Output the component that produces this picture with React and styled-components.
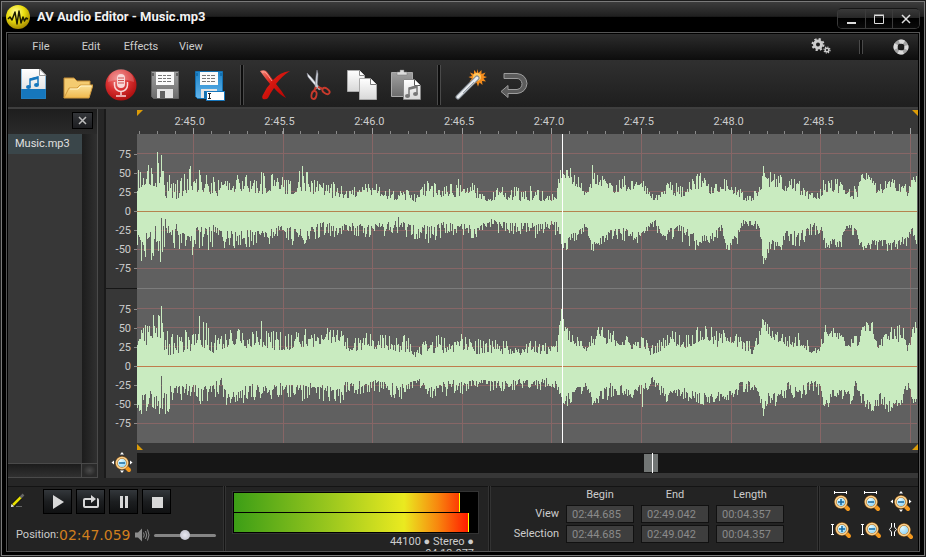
import React from 'react';
import styled, { createGlobalStyle, css } from 'styled-components';

const GlobalStyle = createGlobalStyle`
  * {
    box-sizing: border-box;
  }
  body {
    margin: 0;
    background: #1c1c1c;
    color: #ccc;
    font-family: 'Roboto', 'Liberation Sans', sans-serif;
    font-size: 11px;
    line-height: 14px;
  }
  button,
  input {
    font: inherit;
    color: inherit;
    margin: 0;
    padding: 0;
  }
`;

const Page = styled.div`
  display: flex;
  min-height: 100vh;
  padding: 1px;
`;

const Window = styled.div`
  flex: 1;
  min-width: 0;
  display: flex;
  flex-direction: column;
  border: 1px solid #7a7a7a;
  background: #000;
`;

const TitleBar = styled.header`
  display: flex;
  height: 30px;
  padding: 0 4px;
  background: linear-gradient(#3c3c3c, #1f1f1f 48%, #000 50%, #000);
`;

const Title = styled.h1`
  flex: 1;
  margin: 0 0 0 7px;
  color: #f2f2f2;
  font-size: 13px;
  font-weight: 700;
  line-height: 30px;
`;

const WindowButtons = styled.div`
  display: flex;
  height: 21px;
  margin-top: 6px;
  border: 1px solid #3a3a3a;
  border-top-color: #161616;
  border-radius: 5px;
  overflow: hidden;
`;

const WindowButton = styled.button`
  display: flex;
  justify-content: center;
  align-items: center;
  width: 27px;
  border: 0;
  background: linear-gradient(#3a3a3a, #262626 48%, #000 50%, #0a0a0a);
  & + & {
    border-left: 1px solid #3c3c3c;
  }
`;

const Frame = styled.div`
  flex: 1;
  display: flex;
  flex-direction: column;
  margin: 0 4px 3px;
  padding: 1px 1px 0;
  border: 1px solid #555;
  background: #000;
`;

const MenuBar = styled.nav`
  display: flex;
  align-items: center;
  height: 26px;
  padding: 0 3px 0 8px;
  background: linear-gradient(#2c2c2c, #0d0d0d);
`;

const MenuItem = styled.button`
  width: 50px;
  height: 24px;
  border: 0;
  background: none;
`;

const MenuTools = styled.div`
  display: flex;
  align-items: center;
  margin-left: auto;
  gap: 24px;
`;

const Separator = styled.div`
  width: 4px;
  height: ${({ $height }) => $height}px;
  border-left: 1px solid #4a4a4a;
  border-right: 1px solid #4a4a4a;
  background: #0c0c0c;
`;

const PlainButton = styled.button`
  display: flex;
  justify-content: center;
  align-items: center;
  width: ${({ $width }) => $width}px;
  height: ${({ $height }) => $height}px;
  border: 0;
  background: none;
`;

const Toolbar = styled.div`
  display: flex;
  align-items: center;
  height: 49px;
  padding: 3px 3px 0;
  border-bottom: 2px solid #3e3e3e;
  background: linear-gradient(#303030, #1e1e1e);
`;

const ToolbarGap = styled.div`
  display: flex;
  justify-content: center;
  width: 21px;
`;

const Main = styled.main`
  flex: 1;
  display: grid;
  grid-template-columns: 90px 8px minmax(0, 1fr);
`;

const FilePanel = styled.aside`
  display: flex;
  flex-direction: column;
  border-right: 1px solid #4a4a4a;
  background: #373737;
`;

const FilePanelHeader = styled.div`
  display: flex;
  justify-content: flex-end;
  align-items: flex-start;
  height: 25px;
  padding: 3px 4px 0 0;
  background: linear-gradient(#1e1e1e, #2a2a2a);
`;

const CloseButton = styled.button`
  display: flex;
  justify-content: center;
  align-items: center;
  width: 21px;
  height: 17px;
  border: 1px solid #000;
  background: linear-gradient(#34363a, #1c1d20);
`;

const FileArea = styled.div`
  flex: 1;
  display: flex;
`;

const FileList = styled.ul`
  flex: 1;
  margin: 0;
  padding: 0;
  list-style: none;
`;

const FileItem = styled.li`
  height: 20px;
  padding: 0 7px;
  background: #3a464a;
  line-height: 20px;
  color: #e0e0e0;
`;

const ScrollTrack = styled.div`
  ${({ $vertical }) =>
    $vertical
      ? css`
          width: 15px;
          background: linear-gradient(90deg, #1c1c1c, #303030);
        `
      : css`
          display: flex;
          justify-content: flex-end;
          height: 15px;
          border-top: 1px solid #4a4a4a;
          border-bottom: 1px solid #4a4a4a;
          background: linear-gradient(#1c1c1c, #303030);
        `}
`;

const ScrollCorner = styled.div`
  width: 16px;
  border-left: 1px solid #4a4a4a;
  background: radial-gradient(#4a4a4a, #2a2a2a 60%);
`;

const Splitter = styled.div`
  border-right: 2px solid #1a1a1a;
  background: #262626;
`;

const Editor = styled.section`
  display: grid;
  grid-template-columns: 31px minmax(0, 1fr);
  grid-template-rows: 25px minmax(0, 1fr) 10px 20px;
  padding-bottom: 5px;
  background: #373737;
`;

const Ruler = styled.div`
  display: flex;
  flex-direction: column;
  grid-column: 2;
`;

const RulerLabels = styled.div`
  display: grid;
  grid-template-columns: repeat(8, 1fr);
  margin: 0 7% 0 1%;
  line-height: 12px;
  text-align: center;
`;

const RulerTicks = styled.div`
  height: 6px;
`;

const Markers = styled.div`
  display: flex;
  justify-content: space-between;
  grid-column: 2;
  height: 7px;
  padding-top: 1px;
`;

const Scale = styled.div`
  display: flex;
  flex-direction: column;
`;

const ChannelScale = styled.div`
  flex: 1;
  display: flex;
  flex-direction: column;
  padding: 11px 0 10px;
  & + & {
    border-top: 1px solid #161616;
  }
`;

const ScaleLabel = styled.div`
  flex: 1;
  display: flex;
  justify-content: flex-end;
  align-items: center;
  gap: 3px;
  &::after {
    content: '';
    width: 3px;
    height: 1px;
    background: #8a8a8a;
  }
`;

const StretchSvg = styled.svg`
  display: block;
  width: 100%;
  height: 100%;
  min-height: ${({ $minHeight }) => $minHeight || 0}px;
  shape-rendering: crispEdges;
`;

const Bottom = styled.footer`
  display: flex;
  height: 73px;
  border-top: 8px solid #262626;
  background: #232323;
  box-shadow: inset 0 1px #141414;
  overflow: hidden;
`;

const Player = styled.section`
  display: flex;
  flex-direction: column;
  gap: 11px;
  width: 215px;
  padding-top: 3px;
`;

const PlayerRow = styled.div`
  display: flex;
  align-items: center;
`;

const PencilButton = styled(PlainButton)`
  margin-right: 15px;
`;

const Transport = styled.div`
  display: flex;
  gap: 4px;
`;

const TransportButton = styled.button`
  display: flex;
  justify-content: center;
  align-items: center;
  width: 29px;
  height: 25px;
  border: 1px solid #000;
  background: linear-gradient(#33373b, #1c1e20 50%, #101112);
`;

const PositionLabel = styled.span`
  margin-left: 8px;
  width: 43px;
`;

const PositionTime = styled.output`
  width: 75px;
  color: #d07f1e;
  font-family: 'DejaVu Sans', sans-serif;
  font-size: 14px;
  line-height: 20px;
`;

const VolumeSlider = styled.input`
  appearance: none;
  width: 62px;
  height: 12px;
  margin-left: 4px;
  background: none;
  &::-webkit-slider-runnable-track {
    height: 3px;
    border-radius: 2px;
    background: #858585;
  }
  &::-webkit-slider-thumb {
    appearance: none;
    width: 10px;
    height: 10px;
    margin-top: -4px;
    border-radius: 50%;
    background: radial-gradient(#e8e8f2, #b8b8c4);
  }
`;

const PanelDivider = styled.div`
  width: 3px;
  border-left: 1px solid #333;
  border-right: 1px solid #333;
  background: #141414;
`;

const MeterPanel = styled.section`
  width: 262px;
  padding: 5px 9px 0 6px;
`;

const Meters = styled.div`
  display: grid;
  gap: 1px;
  height: 43px;
  padding: 1px;
  border: 1px solid #333;
  background: #000;
`;

const Meter = styled.div`
  display: flex;
  justify-content: flex-end;
  background: linear-gradient(90deg, #3c9e16, #9cc81e 40%, #eaea20 70%, #f8860e 84%, #ff1e00 96%);
`;

const MeterRest = styled.div`
  border-left: 1px solid #ff0;
  background: #000;
`;

const Format = styled.p`
  margin: 2px 5px 0;
  text-align: right;
  line-height: 12px;
`;

const Ranges = styled.section`
  flex: 1;
  display: flex;
  justify-content: flex-end;
  padding: 1px 26px 0 0;
`;

const RangeTable = styled.table`
  border-spacing: 7px 2px;
  height: 0;
  margin-top: -2px;
  th {
    padding: 0;
    font-weight: 400;
    line-height: 16px;
  }
  th[scope='row'] {
    text-align: right;
  }
  td {
    padding: 0;
  }
`;

const TimeField = styled.input`
  display: block;
  width: 68px;
  height: 18px;
  padding: 0 5px;
  border: 1px solid #111;
  background: #3e3e3e;
  color: #8a8a8a;
`;

const ZoomPanel = styled.section`
  display: grid;
  grid-template-columns: repeat(3, 24px);
  grid-template-rows: repeat(2, 24px);
  gap: 3px 6px;
  width: 98px;
  padding: 4px 0 0 9px;
`;

const GradientDefs = styled.svg`
  position: absolute;
  width: 0;
  height: 0;
`;

const IconSvg = styled.svg`
  flex-shrink: 0;
`;

const Icon = ({ size = 32, children }) => (
  <IconSvg width={size} height={size} viewBox={`0 0 ${size} ${size}`} aria-hidden="true">
    {children}
  </IconSvg>
);

const vertical = { x1: 0, y1: 0, x2: 0, y2: 1 };

const Gradients = () => (
  <GradientDefs aria-hidden="true">
    <defs>
      <radialGradient id="yellow" cx="0.4" cy="0.3" r="0.7">
        <stop offset="0" stopColor="#fffb9a" />
        <stop offset="0.5" stopColor="#ecdf10" />
        <stop offset="1" stopColor="#a88c00" />
      </radialGradient>
      <linearGradient id="paper" {...vertical}>
        <stop offset="0" stopColor="#fff" />
        <stop offset="1" stopColor="#d8d8d8" />
      </linearGradient>
      <linearGradient id="folder" {...vertical}>
        <stop offset="0" stopColor="#fbe29a" />
        <stop offset="1" stopColor="#f0b84c" />
      </linearGradient>
      <radialGradient id="red" cx="0.4" cy="0.3" r="0.75">
        <stop offset="0" stopColor="#f08080" />
        <stop offset="0.5" stopColor="#d83030" />
        <stop offset="1" stopColor="#a80c0c" />
      </radialGradient>
      <linearGradient id="cross" x1="0" y1="0" x2="1" y2="1">
        <stop offset="0" stopColor="#f89080" />
        <stop offset="0.4" stopColor="#d81810" />
        <stop offset="1" stopColor="#b00000" />
      </linearGradient>
      <linearGradient id="grey" {...vertical}>
        <stop offset="0" stopColor="#a0a0a0" />
        <stop offset="1" stopColor="#6c6c6c" />
      </linearGradient>
      <linearGradient id="blue" {...vertical}>
        <stop offset="0" stopColor="#1e84c8" />
        <stop offset="1" stopColor="#62b4ec" />
      </linearGradient>
      <radialGradient id="lens" cx="0.35" cy="0.3" r="0.8">
        <stop offset="0" stopColor="#e4fbff" />
        <stop offset="1" stopColor="#7cc8f0" />
      </radialGradient>
    </defs>
  </GradientDefs>
);

const LogoIcon = () => (
  <svg width="24" height="30" viewBox="0 -3 24 30" aria-hidden="true">
    <circle cx="12" cy="12" r="12" fill="url(#yellow)" />
    <path
      d="M2 14l2-2 2 3 3-8 2 12 2-13 2 12 2-6 1.500 4 1.500-3 2 1"
      fill="none"
      stroke="#1c1a00"
      strokeWidth="1.500"
      strokeLinejoin="round"
    />
  </svg>
);

const Note = ({ color }) => (
  <>
    <path d="M13 18V10l8-2v8" fill="none" stroke={color} strokeWidth="1.500" />
    <path d="M13 9.500l8-2v2.500l-8 2z" fill={color} />
    <ellipse cx="11.500" cy="18" rx="2.500" ry="2" fill={color} />
    <ellipse cx="19.500" cy="16" rx="2.500" ry="2" fill={color} />
  </>
);

const NewFileIcon = () => (
  <Icon>
    <path d="M4 0h19l6 6v24H4z" fill="url(#paper)" />
    <path d="M4 20h25v10H4z" fill="#1677bd" />
    <path d="M4.500 0v29.500h24V6" fill="none" stroke="#2a86c4" opacity="0.5" />
    <path d="M22.500 0v6.500h6.500z" fill="#fff" stroke="#999" />
    <Note color="#1677bd" />
  </Icon>
);

const OpenIcon = () => (
  <Icon>
    <path d="M3 29V9h10l3 3h13v4" fill="#f4cb70" stroke="#c08a34" />
    <path d="M3 29l5-10h8l3-3h13l-4 13z" fill="url(#folder)" stroke="#d29a3c" strokeLinejoin="round" />
    <path d="M9 20h8l3-3h10" fill="none" stroke="#fff3c8" />
  </Icon>
);

const RecordIcon = () => (
  <Icon>
    <circle cx="16" cy="16" r="15.500" fill="url(#red)" />
    <path d="M3 13a13 13 0 0 1 26 0q-13-5-26 0z" fill="#fff" opacity="0.2" />
    <rect x="12" y="5" width="8" height="14" rx="4" fill="#f8d8d8" />
    <path d="M13 9h6M13 11.500h6M13 14h6" stroke="#d05050" />
    <path d="M9.500 13v3a6.500 6.500 0 0 0 13 0v-3M16 22.500V26M11 27h10" fill="none" stroke="#f8d8d8" strokeWidth="1.500" />
  </Icon>
);

const Floppy = ({ body, edge }) => (
  <>
    <path d="M2.500 2.500h27v27h-25l-2-2z" fill={body} stroke={edge} />
    <path d="M7 3h18v13H7z" fill="#fafafa" />
    <path d="M9 6.500h14M9 9.500h14M9 12.500h14" stroke="#777" strokeDasharray="4 1 3 1" />
    <path d="M3 4h2v3H3zM27 4h2v3h-2z" fill={edge} />
    <path d="M8 20h16v9H8z" fill="#e4e4e4" />
    <path d="M11 22h5v7h-5z" fill={edge} />
  </>
);

const SaveIcon = () => (
  <Icon>
    <Floppy body="url(#grey)" edge="#606060" />
  </Icon>
);

const SaveAsIcon = () => (
  <Icon>
    <Floppy body="url(#blue)" edge="#1470b0" />
    <path d="M13.500 22.500h18v9h-18z" fill="#fff" stroke="#1677bd" />
    <path d="M15 24.500h3M16.500 24v5M15 29.500h3" stroke="#222" fill="none" />
  </Icon>
);

const DeleteIcon = () => (
  <Icon>
    <path
      d="M2 2q5-2 7 1l6 8q7-8 17-9-8 5-14 13 6 7 10 14-6-3-12-10-3 4-6 10-2 2-5 1-2-2 1-6 2-5 6-9-5-6-10-13z"
      fill="url(#cross)"
    />
    <path d="M4 3q3-1 5 2l5 7" fill="none" stroke="#ffc0b4" opacity="0.7" />
  </Icon>
);

const CutIcon = () => (
  <Icon>
    <path d="M5 4l4 4 10 12-2 1L6 8z" fill="#e8ecf0" stroke="#889" strokeWidth="0.500" />
    <path d="M15 1l1 4-1 15-2-1 1-12z" fill="#cfd6dc" stroke="#889" strokeWidth="0.500" />
    <ellipse cx="12" cy="26" rx="2.500" ry="4" fill="none" stroke="#c83a2c" strokeWidth="1.800" transform="rotate(12 12 26)" />
    <ellipse cx="24" cy="22" rx="2.500" ry="4" fill="none" stroke="#c83a2c" strokeWidth="1.800" transform="rotate(-55 24 22)" />
    <path d="M14 18l-2 4M16 18l5 2" stroke="#c83a2c" strokeWidth="2" />
  </Icon>
);

const CopyIcon = () => (
  <Icon>
    <path d="M1.500 1.500h12l5 5v16h-17z" fill="url(#paper)" stroke="#aaa" />
    <path d="M13.500 1.500v5h5" fill="#fff" stroke="#888" />
    <path d="M13.500 9.500h11l6 6v15h-17z" fill="url(#paper)" stroke="#aaa" />
    <path d="M24.500 9.500v6h6" fill="#fff" stroke="#777" />
  </Icon>
);

const PasteIcon = () => (
  <Icon>
    <path d="M1.500 3.500h21v24h-21z" fill="url(#grey)" stroke="#aaa" />
    <path d="M7 3h3V1h4v2h3v3H7z" fill="#ddd" stroke="#777" strokeWidth="0.500" />
    <path d="M13.500 10.500h11l6 6v14h-17z" fill="url(#paper)" stroke="#888" />
    <path d="M24.500 10.500v6h6" fill="#fff" stroke="#555" />
    <g transform="translate(6 9)">
      <Note color="#777" />
    </g>
  </Icon>
);

const WandIcon = () => (
  <Icon>
    <path
      d="M22 0l1.500 4 3-3 0 4 4-1.500-2 3.500 3.500 1-3.500 1.500 2.500 3-4-.5.5 4-3-2.500-1.500 4-1.500-4-3.500 2.500.5-4-4 .5 2.500-3-3.500-1.500 3.500-1-2-3.500 4 1.500 0-4 3 3z"
      fill="#f48c1c"
    />
    <circle cx="22" cy="8" r="4" fill="#ffc860" />
    <path d="M3 28L22 9" stroke="#808890" strokeWidth="5" strokeLinecap="round" />
    <path d="M3 28L22 9" stroke="#e8ecf0" strokeWidth="3" strokeLinecap="round" />
    <path d="M8 24L19 13" stroke="#9aa2aa" strokeWidth="1" />
  </Icon>
);

const UndoIcon = () => (
  <Icon>
    <path
      d="M5 4.500h13q9 1 10 10-1 9-10 10H9v4l-7-6 7-6v4h9q5-1 5-6-1-5-5-5H5z"
      fill="#5c5c5c"
      stroke="#9c9c9c"
      strokeLinejoin="round"
    />
  </Icon>
);

const GearsIcon = () => (
  <Icon size={20}>
    <circle cx="7" cy="7.500" r="3.500" fill="none" stroke="#ccc" strokeWidth="3" />
    <circle cx="7" cy="7.500" r="5.500" fill="none" stroke="#ccc" strokeWidth="2" strokeDasharray="2.200 2.120" />
    <circle cx="16" cy="13" r="1.800" fill="none" stroke="#ccc" strokeWidth="1.500" />
    <circle cx="16" cy="13" r="3" fill="none" stroke="#ccc" strokeWidth="1.200" strokeDasharray="1.200 1.150" />
  </Icon>
);

const HelpIcon = () => (
  <Icon size={16}>
    <circle cx="8" cy="8" r="5.500" fill="none" stroke="#a4a4a4" strokeWidth="4" />
    <circle cx="8" cy="8" r="5.500" fill="none" stroke="#dcdcdc" strokeWidth="4" strokeDasharray="5 3.640" strokeDashoffset="2.500" />
  </Icon>
);

const PencilIcon = () => (
  <Icon size={18}>
    <path d="M4 12L12 4" stroke="#111" strokeWidth="4" />
    <path d="M4 12L12 4" stroke="#e8e000" strokeWidth="2.500" />
    <path d="M11.500 4.500l3-3" stroke="#666" strokeWidth="2.500" />
    <path d="M2 14l.5-3 2.500 2.500z" fill="#fff" />
    <path d="M7 13.500h6" stroke="#666" />
  </Icon>
);

const SpeakerIcon = () => (
  <Icon size={16}>
    <path d="M1 5.500h3l4-4v13l-4-4H1z" fill="#8c8c8c" />
    <path d="M9.500 5.500q1.500 2.500 0 5M11.500 4q2.500 4 0 8M13.500 2.500q3 5.500 0 11" fill="none" stroke="#8c8c8c" />
  </Icon>
);

const arrowPaths = {
  horizontal: 'M5 2.500h13M5.500 1v3M17.500 1v3',
  vertical: 'M3.500 7v11M2 7.500h3M2 17.500h3',
  collapse: 'M2.500 6v4l-2 2.500 2 2.500v4M5.500 6v4l2 2.500-2 2.500v4',
};

const spreadArrows = 'M12 1l2 2.500h-4zM12 22l2-2.500h-4zM1.500 11.500l2.500-2v4zM22.500 11.500l-2.500-2v4z';

// Magnifier with a set of white arrows that tell the direction of the zoom
const ZoomIcon = ({ arrows, sign, cx = 12, cy = 12 }) => (
  <Icon size={24}>
    {arrows === 'spread' ? (
      <path d={spreadArrows} fill="#fff" />
    ) : (
      <path d={arrowPaths[arrows]} fill="none" stroke="#fff" />
    )}
    <path d={`M${cx + 4} ${cy + 4}l3 3`} stroke="#f49a20" strokeWidth="4" strokeLinecap="round" />
    <circle cx={cx} cy={cy} r="5.500" fill="url(#lens)" stroke="#a86818" strokeWidth="2.500" />
    <circle cx={cx} cy={cy} r="5.500" fill="none" stroke="#f8d090" strokeWidth="1.500" />
    {sign && <path d={`M${cx - 3} ${cy}h6${sign === '+' ? `M${cx} ${cy - 3}v6` : ''}`} stroke="#1468a0" strokeWidth="1.500" />}
  </Icon>
);

const MarkerIcon = ({ path }) => (
  <IconSvg width="7" height="7" viewBox="0 0 7 7" aria-hidden="true">
    <path d={path} fill="#dc9c08" />
  </IconSvg>
);

const VIEW_WIDTH = 781;
const VIEW_HEIGHT = 309;
const MAJOR_TICKS = [56, 146, 235, 325, 414, 504, 594, 683, 773];
const MINOR_TICKS = Array.from({ length: 44 }, (_, i) => Math.round(2 + i * 17.930));
const TIMES = ['2:45.0', '2:45.5', '2:46.0', '2:46.5', '2:47.0', '2:47.5', '2:48.0', '2:48.5'];
const LEVELS = [75, 50, 25, 0, -25, -50, -75];
const PLAYHEAD = 425;

// Envelopes as [x, quietest, loudest]; the samples lie between the two
const CHANNELS = [
  {
    zero: 77,
    line: '#b5834f',
    up: [
      [0, 21, 38], [17, 26, 40], [24, 22, 42], [28, 14, 37], [45, 12, 38], [55, 20, 38], [64, 19, 34], [80, 16, 30], [95, 18, 34],
      [110, 20, 36], [125, 17, 36], [138, 20, 36], [152, 16, 28], [160, 20, 38], [176, 18, 35], [184, 15, 28], [200, 14, 25],
      [215, 12, 20], [223, 18, 31], [228, 22, 31], [233, 15, 22], [238, 20, 26], [246, 12, 19], [278, 10, 18], [290, 15, 27],
      [320, 15, 25], [332, 18, 30], [343, 12, 18], [353, 10, 14], [360, 13, 21], [380, 11, 23], [400, 11, 22], [418, 10, 14],
      [421, 20, 33], [425, 38, 45], [430, 28, 38], [440, 25, 33], [446, 17, 23], [450, 13, 19], [455, 27, 36], [463, 27, 33],
      [472, 22, 34], [478, 18, 24], [487, 22, 33], [495, 18, 27], [500, 24, 31], [507, 20, 28], [512, 11, 16], [520, 12, 16],
      [527, 15, 25], [536, 16, 28], [546, 15, 22], [556, 22, 35], [565, 24, 35], [573, 18, 26], [590, 21, 31], [600, 16, 24],
      [607, 11, 15], [620, 10, 18], [624, 18, 25], [626, 42, 44], [630, 27, 30], [636, 21, 34], [643, 22, 34], [660, 18, 31],
      [670, 12, 18], [682, 13, 17], [688, 20, 34], [700, 20, 33], [710, 12, 20], [720, 14, 24], [725, 26, 35], [733, 30, 35],
      [740, 15, 22], [750, 22, 30], [766, 20, 30], [770, 15, 20], [776, 30, 35], [781, 28, 34],
    ],
    down: [
      [0, 24, 40], [5, 28, 50], [12, 18, 46], [24, 14, 50], [28, 15, 38], [40, 14, 38], [53, 26, 40], [60, 16, 34], [73, 16, 38],
      [83, 13, 25], [92, 20, 36], [113, 20, 34], [130, 20, 34], [138, 18, 31], [144, 12, 18], [155, 18, 32], [170, 18, 30],
      [185, 12, 24], [203, 14, 26], [213, 13, 20], [223, 14, 24], [243, 13, 22], [262, 11, 20], [270, 13, 24], [293, 15, 30],
      [306, 12, 24], [323, 13, 21], [340, 16, 27], [348, 10, 15], [354, 8, 13], [363, 12, 22], [396, 12, 26], [410, 9, 16],
      [420, 12, 22], [425, 32, 38], [436, 22, 32], [449, 12, 18], [454, 34, 39], [460, 30, 35], [473, 20, 27], [486, 18, 26],
      [496, 22, 34], [503, 21, 26], [510, 15, 21], [518, 9, 18], [523, 20, 27], [543, 15, 27], [558, 24, 36], [563, 27, 32],
      [576, 22, 28], [584, 15, 25], [590, 34, 39], [600, 22, 32], [605, 10, 14], [620, 11, 16], [624, 24, 32], [626, 48, 53],
      [630, 38, 42], [633, 28, 36], [641, 32, 41], [650, 20, 30], [663, 22, 34], [670, 13, 24], [683, 12, 20], [688, 30, 36],
      [703, 28, 36], [709, 15, 18], [720, 15, 24], [725, 36, 43], [733, 28, 40], [743, 30, 36], [753, 30, 38], [770, 26, 32],
      [774, 15, 20], [779, 30, 37], [781, 30, 35],
    ],
    peaks: { 11: 46, 20: 59, 21: 48, 24: 56, 52: 42, 53: 45, 62: 41, 109: 36, 126: 38, 165: 45, 321: 32, 425: 45, 433: 43, 455: 46, 563: 38, 633: 39, 724: 36 },
    dips: { 4: 50, 14: 49, 23: 51, 24: 7, 28: 8, 55: 44, 87: 37, 261: 6, 454: 39, 558: 39, 626: 53 },
  },
  {
    zero: 232,
    line: '#c07c4c',
    up: [
      [0, 22, 41], [14, 22, 42], [17, 26, 51], [24, 24, 50], [28, 12, 38], [45, 11, 35], [60, 18, 36], [68, 18, 42], [76, 13, 35],
      [90, 20, 34], [103, 22, 37], [112, 18, 34], [125, 20, 36], [136, 17, 32], [156, 17, 28], [163, 20, 37], [176, 18, 34],
      [190, 23, 35], [203, 25, 37], [210, 15, 25], [222, 15, 26], [230, 18, 32], [246, 18, 30], [256, 15, 26], [270, 15, 28],
      [278, 10, 20], [288, 12, 22], [300, 14, 29], [313, 12, 25], [323, 18, 30], [340, 13, 25], [360, 13, 24], [380, 12, 20],
      [399, 13, 24], [414, 12, 20], [420, 15, 27], [424, 42, 57], [427, 30, 38], [436, 22, 33], [444, 20, 26], [450, 15, 20],
      [456, 22, 34], [462, 24, 38], [473, 22, 34], [486, 20, 30], [496, 17, 24], [506, 20, 28], [513, 10, 18], [526, 18, 26],
      [533, 24, 35], [546, 18, 28], [563, 24, 38], [570, 26, 39], [580, 18, 32], [590, 26, 36], [603, 16, 28], [616, 12, 20],
      [621, 22, 30], [626, 44, 47], [631, 30, 38], [640, 25, 34], [653, 18, 28], [663, 20, 32], [678, 11, 16], [685, 20, 28],
      [688, 32, 39], [700, 26, 34], [710, 17, 25], [716, 22, 34], [720, 18, 26], [725, 34, 43], [735, 36, 41], [740, 16, 25],
      [746, 20, 28], [750, 28, 36], [760, 24, 40], [767, 26, 38], [770, 16, 26], [778, 30, 41], [781, 36, 40],
    ],
    down: [
      [0, 38, 46], [4, 30, 48], [10, 25, 43], [23, 28, 48], [30, 20, 45], [36, 18, 40], [46, 18, 34], [60, 20, 36], [76, 18, 32],
      [84, 13, 26], [90, 22, 37], [96, 24, 37], [113, 17, 32], [130, 20, 33], [143, 18, 28], [163, 20, 33], [176, 18, 28],
      [193, 22, 36], [203, 22, 36], [210, 14, 25], [230, 18, 26], [240, 14, 22], [255, 18, 32], [266, 18, 30], [276, 15, 19],
      [284, 14, 19], [291, 20, 30], [303, 18, 30], [316, 14, 27], [326, 18, 27], [336, 14, 22], [363, 16, 24], [380, 14, 20],
      [403, 14, 23], [416, 12, 18], [421, 22, 30], [426, 36, 41], [431, 28, 38], [443, 20, 28], [448, 15, 20], [455, 32, 42],
      [463, 26, 34], [473, 18, 30], [478, 24, 36], [486, 18, 28], [496, 26, 36], [503, 18, 26], [510, 16, 24], [515, 12, 16],
      [523, 20, 26], [530, 26, 35], [546, 22, 30], [560, 28, 37], [576, 26, 34], [593, 26, 37], [603, 17, 25], [620, 15, 22],
      [626, 42, 48], [630, 28, 38], [641, 28, 40], [651, 16, 24], [660, 24, 33], [673, 14, 22], [683, 18, 28], [688, 34, 43],
      [696, 24, 32], [713, 26, 36], [718, 15, 24], [725, 28, 36], [733, 38, 45], [743, 28, 36], [751, 36, 44], [763, 34, 40],
      [770, 16, 22], [776, 30, 37], [781, 30, 34],
    ],
    peaks: { 16: 51, 21: 51, 24: 60, 62: 50, 66: 44, 124: 45, 424: 57, 461: 39, 568: 40, 625: 47 },
    dips: { 4: 48, 22: 48, 24: 10, 30: 45, 84: 12, 89: 39, 203: 37, 505: 41, 626: 50 },
  },
];

const createRandom = (seed) => {
  let state = seed;
  return () => {
    state = (state * 1103515245 + 12345) % 2147483648;
    return state / 2147483648;
  };
};

const sampleEnvelope = (points, exact, seed) => {
  const random = createRandom(seed);
  let index = 0;
  return Array.from({ length: VIEW_WIDTH - 1 }, (_, x) => {
    while (index < points.length - 2 && points[index + 1][0] <= x) index += 1;
    const [x0, low0, high0] = points[index];
    const [x1, low1, high1] = points[index + 1];
    const t = (x - x0) / (x1 - x0);
    const low = low0 + (low1 - low0) * t - 1;
    const high = high0 + (high1 - high0) * t + 3;
    const value = Math.round(low + (high - low) * random() ** 1.400);
    return exact[x] || value;
  });
};

const wavePath = ({ zero, up, down, peaks, dips }, seed) => {
  const top = sampleEnvelope(up, peaks, seed);
  const bottom = sampleEnvelope(down, dips, seed + 77);
  return top.map((height, x) => `M${x} ${zero - height}h1V${zero + bottom[x]}h-1z`).join('');
};

const WaveForm = () => (
  <StretchSvg
    $minHeight={200}
    viewBox={`0 0 ${VIEW_WIDTH} ${VIEW_HEIGHT}`}
    preserveAspectRatio="none"
    role="img"
    aria-label="Waveform"
  >
    <rect width={VIEW_WIDTH} height={VIEW_HEIGHT} fill="#606060" />
    {MAJOR_TICKS.map((x) => (
      <rect key={x} x={x} width="1" height={VIEW_HEIGHT} fill="#876666" />
    ))}
    {CHANNELS.map(({ zero }) =>
      [-58, -39, -20, 19, 38, 57].map((y) => (
        <rect key={zero + y} y={zero + y} width={VIEW_WIDTH - 1} height="1" fill="#876666" />
      ))
    )}
    <rect y="154" width={VIEW_WIDTH} height="1" fill="#7c7c7c" />
    {CHANNELS.map((channel, i) => (
      <React.Fragment key={channel.zero}>
        <path d={wavePath(channel, 41 + i * 500)} fill="#c9ebc0" />
        <rect y={channel.zero} width={VIEW_WIDTH - 1} height="1" fill={channel.line} />
      </React.Fragment>
    ))}
    <rect x={PLAYHEAD} width="1" height={VIEW_HEIGHT} fill="#fff" />
  </StretchSvg>
);

const ToolButton = ({ label, children }) => (
  <PlainButton $width={44} $height={36} aria-label={label}>
    {children}
  </PlainButton>
);

const ZoomButton = ({ label, ...icon }) => (
  <PlainButton $width={24} $height={24} aria-label={label}>
    <ZoomIcon {...icon} />
  </PlainButton>
);

const RANGES = [
  { name: 'View', values: ['02:44.685', '02:49.042', '00:04.357'] },
  { name: 'Selection', values: ['02:44.685', '02:49.042', '00:04.357'] },
];
const RANGE_COLUMNS = ['Begin', 'End', 'Length'];

export default () => {
  return (
    <Page>
      <GlobalStyle />
      <Gradients />
      <Window>
        <TitleBar>
          <LogoIcon />
          <Title>AV Audio Editor - Music.mp3</Title>
          <WindowButtons>
            <WindowButton aria-label="Minimize">
              <Icon size={12}>
                <path d="M1 10h9" stroke="#ddd" strokeWidth="2" />
              </Icon>
            </WindowButton>
            <WindowButton aria-label="Maximize">
              <Icon size={12}>
                <path d="M1.500 2.500h9v8h-9zM1 2h10" fill="none" stroke="#ddd" />
              </Icon>
            </WindowButton>
            <WindowButton aria-label="Close">
              <Icon size={12}>
                <path d="M2 2l8 8M10 2l-8 8" stroke="#ddd" strokeWidth="1.500" />
              </Icon>
            </WindowButton>
          </WindowButtons>
        </TitleBar>

        <Frame>
          <MenuBar>
            <MenuItem>File</MenuItem>
            <MenuItem>Edit</MenuItem>
            <MenuItem>Effects</MenuItem>
            <MenuItem>View</MenuItem>
            <MenuTools>
              <PlainButton $width={28} $height={24} aria-label="Settings">
                <GearsIcon />
              </PlainButton>
              <Separator $height={14} />
              <PlainButton $width={28} $height={24} aria-label="Help">
                <HelpIcon />
              </PlainButton>
            </MenuTools>
          </MenuBar>

          <Toolbar>
            <ToolButton label="New">
              <NewFileIcon />
            </ToolButton>
            <ToolButton label="Open">
              <OpenIcon />
            </ToolButton>
            <ToolButton label="Record">
              <RecordIcon />
            </ToolButton>
            <ToolButton label="Save">
              <SaveIcon />
            </ToolButton>
            <ToolButton label="Save as">
              <SaveAsIcon />
            </ToolButton>
            <ToolbarGap>
              <Separator $height={40} />
            </ToolbarGap>
            <ToolButton label="Delete">
              <DeleteIcon />
            </ToolButton>
            <ToolButton label="Cut">
              <CutIcon />
            </ToolButton>
            <ToolButton label="Copy">
              <CopyIcon />
            </ToolButton>
            <ToolButton label="Paste">
              <PasteIcon />
            </ToolButton>
            <ToolbarGap>
              <Separator $height={40} />
            </ToolbarGap>
            <ToolButton label="Effects wizard">
              <WandIcon />
            </ToolButton>
            <ToolButton label="Undo">
              <UndoIcon />
            </ToolButton>
          </Toolbar>

          <Main>
            <FilePanel>
              <FilePanelHeader>
                <CloseButton aria-label="Close panel">
                  <Icon size={9}>
                    <path d="M1 1l7 7M8 1l-7 7" stroke="#bbb" strokeWidth="1.500" />
                  </Icon>
                </CloseButton>
              </FilePanelHeader>
              <FileArea>
                <FileList>
                  <FileItem>Music.mp3</FileItem>
                </FileList>
                <ScrollTrack $vertical />
              </FileArea>
              <ScrollTrack>
                <ScrollCorner />
              </ScrollTrack>
            </FilePanel>
            <Splitter />
            <Editor>
              <Ruler>
                <Markers>
                  <MarkerIcon path="M0 0h6l-6 6z" />
                  <MarkerIcon path="M1 0h6v6z" />
                </Markers>
                <RulerLabels>
                  {TIMES.map((time) => (
                    <span key={time}>{time}</span>
                  ))}
                </RulerLabels>
                <RulerTicks>
                  <StretchSvg viewBox={`0 0 ${VIEW_WIDTH} 6`} preserveAspectRatio="none" aria-hidden="true">
                    {MINOR_TICKS.map((x) => (
                      <rect key={x} x={x} y="3" width="1" height="3" fill="#8a8a8a" />
                    ))}
                    {MAJOR_TICKS.map((x) => (
                      <rect key={x} x={x} width="1" height="6" fill="#a0a0a0" />
                    ))}
                  </StretchSvg>
                </RulerTicks>
              </Ruler>
              <Scale>
                {CHANNELS.map(({ zero }) => (
                  <ChannelScale key={zero}>
                    {LEVELS.map((level) => (
                      <ScaleLabel key={level}>{level}</ScaleLabel>
                    ))}
                  </ChannelScale>
                ))}
              </Scale>
              <WaveForm />
              <Markers>
                <MarkerIcon path="M0 0l6 6h-6z" />
                <MarkerIcon path="M7 0v6h-6z" />
              </Markers>
              <PlainButton $width={31} $height={20} aria-label="Zoom out full">
                <ZoomIcon arrows="spread" sign="-" />
              </PlainButton>
              <StretchSvg viewBox={`0 0 ${VIEW_WIDTH} 20`} preserveAspectRatio="none" aria-hidden="true">
                <rect width={VIEW_WIDTH} height="20" fill="#161616" />
                <rect x="507" y="1" width="14" height="18" fill="#727675" />
                <rect x="515" width="1" height="20" fill="#fff" />
              </StretchSvg>
            </Editor>
          </Main>

          <Bottom>
            <Player>
              <PlayerRow>
                <PencilButton $width={20} $height={20} aria-label="Edit marker">
                  <PencilIcon />
                </PencilButton>
                <Transport>
                  <TransportButton aria-label="Play">
                    <Icon size={16}>
                      <path d="M3 1l11 7-11 7z" fill="#d8d8d8" />
                    </Icon>
                  </TransportButton>
                  <TransportButton aria-label="Loop">
                    <Icon size={16}>
                      <path d="M4 5H2q-1 0-1 1v6q0 1 1 1h12q1 0 1-1V6q0-1-1-1M2 5h7" fill="none" stroke="#d8d8d8" strokeWidth="2" />
                      <path d="M8 1l5 4-5 4z" fill="#d8d8d8" />
                    </Icon>
                  </TransportButton>
                  <TransportButton aria-label="Pause">
                    <Icon size={16}>
                      <path d="M4 2h3v12H4zM9 2h3v12H9z" fill="#d8d8d8" />
                    </Icon>
                  </TransportButton>
                  <TransportButton aria-label="Stop">
                    <Icon size={16}>
                      <path d="M3 3h11v11H3z" fill="#d8d8d8" />
                    </Icon>
                  </TransportButton>
                </Transport>
              </PlayerRow>
              <PlayerRow>
                <PositionLabel>Position:</PositionLabel>
                <PositionTime>02:47.059</PositionTime>
                <SpeakerIcon />
                <VolumeSlider type="range" aria-label="Volume" defaultValue={50} />
              </PlayerRow>
            </Player>
            <PanelDivider />
            <MeterPanel>
              <Meters>
                <Meter>
                  <MeterRest style={{ width: '7.4%' }} />
                </Meter>
                <Meter>
                  <MeterRest style={{ width: '3.7%' }} />
                </Meter>
              </Meters>
              <Format>
                44100 ● Stereo ●
                <br />
                04:13.077
              </Format>
            </MeterPanel>
            <PanelDivider />
            <Ranges>
              <RangeTable>
                <thead>
                  <tr>
                    <td />
                    {RANGE_COLUMNS.map((column) => (
                      <th key={column} scope="col">
                        {column}
                      </th>
                    ))}
                  </tr>
                </thead>
                <tbody>
                  {RANGES.map(({ name, values }) => (
                    <tr key={name}>
                      <th scope="row">{name}</th>
                      {values.map((value, i) => (
                        <td key={RANGE_COLUMNS[i]}>
                          <TimeField readOnly value={value} aria-label={`${name} ${RANGE_COLUMNS[i]}`} />
                        </td>
                      ))}
                    </tr>
                  ))}
                </tbody>
              </RangeTable>
            </Ranges>
            <PanelDivider />
            <ZoomPanel>
              <ZoomButton label="Zoom in horizontally" arrows="horizontal" sign="+" />
              <ZoomButton label="Zoom out horizontally" arrows="horizontal" sign="-" />
              <ZoomButton label="Zoom out full" arrows="spread" sign="-" />
              <ZoomButton label="Zoom in vertically" arrows="vertical" sign="+" cx={13} />
              <ZoomButton label="Zoom out vertically" arrows="vertical" sign="-" cx={13} />
              <ZoomButton label="Zoom to selection" arrows="collapse" cx={15} cy={13} />
            </ZoomPanel>
          </Bottom>
        </Frame>
      </Window>
    </Page>
  );
};
